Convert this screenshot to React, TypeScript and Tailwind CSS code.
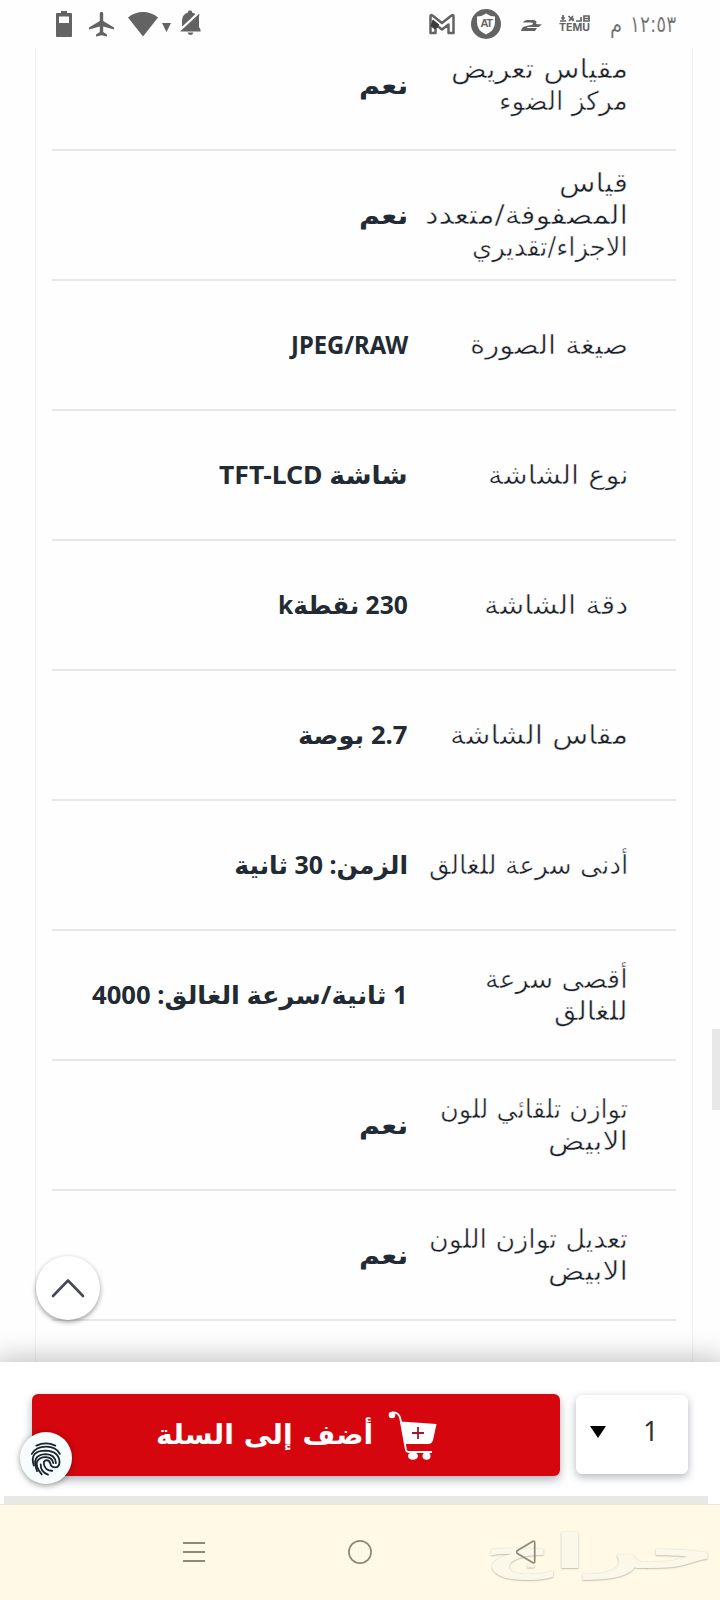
import { useLayoutEffect, useRef, useState } from "react";

type Line = [text: string, width: number];

/** Scales a single line of text horizontally so that it fills a given width. */
function FitText({ text, width }: { text: string; width: number }) {
  const ref = useRef<HTMLSpanElement>(null);
  const [scale, setScale] = useState(1);
  useLayoutEffect(() => {
    if (ref.current) setScale(width / ref.current.offsetWidth);
  }, [text, width]);
  return (
    <span className="block text-right whitespace-nowrap" style={{ width }}>
      <span ref={ref} className="inline-block origin-right" style={{ transform: `scaleX(${scale})` }}>
        {text}
      </span>
    </span>
  );
}

const rows: { label: Line[]; value: Line }[] = [
  { label: [["مقياس تعريض", 177], ["مركز الضوء", 129]], value: ["نعم", 49] },
  { label: [["قياس", 69], ["المصفوفة/متعدد", 203], ["الاجزاء/تقديري", 156]], value: ["نعم", 49] },
  { label: [["صيغة الصورة", 158]], value: ["JPEG/RAW", 117] },
  { label: [["نوع الشاشة", 140]], value: ["شاشة TFT-LCD", 189] },
  { label: [["دقة الشاشة", 144]], value: ["230 نقطةk", 130] },
  { label: [["مقاس الشاشة", 178]], value: ["2.7 بوصة", 110] },
  { label: [["أدنى سرعة للغالق", 199]], value: ["الزمن: 30 ثانية", 174] },
  { label: [["أقصى سرعة", 143], ["للغالق", 74]], value: ["1 ثانية/سرعة الغالق: 4000", 316] },
  { label: [["توازن تلقائي للون", 188], ["الابيض", 80]], value: ["نعم", 49] },
  { label: [["تعديل توازن اللون", 199], ["الابيض", 80]], value: ["نعم", 49] },
];

function StatusBar() {
  return (
    <header className="relative z-10 flex h-[48px] shrink-0 items-center justify-between bg-[#fefefe] pr-[44px] pl-[56px] text-[#636363]">
      <div className="flex items-center">
        <svg width="16" height="26" viewBox="0 0 16 26" fill="currentColor">
          <path fillRule="evenodd" d="M5 0h6v2h4q1 0 1 1v22q0 1-1 1h-14q-1 0-1-1v-22q0-1 1-1H5zM3 5.500V12h10V5.500z" />
        </svg>
        <svg className="ml-[17px]" width="25" height="26" viewBox="0 0 25 26" fill="currentColor">
          <path d="M10.800 2.500a1.700 1.700 0 0 1 3.400 0V10L25 16.500v2L14.200 15.500V21l3.800 2.500V25.500l-5.500-1.200-5.500 1.200v-2l3.800-2.500v-5.500L0 18.500v-2L10.800 10z" />
        </svg>
        <svg className="ml-[14px]" width="30" height="26" viewBox="0 0 30 26" fill="currentColor">
          <path d="M15 25.500 0 6.500Q6.500 1 15 1t15 5.500z" />
        </svg>
        <svg className="mt-[7px] ml-[4px]" width="9" height="9" viewBox="0 0 9 9" fill="currentColor">
          <path d="M0 0h9L4.500 9z" />
        </svg>
        <svg className="-mt-[2px] ml-[9px]" width="22" height="26" viewBox="0 0 22 26" fill="currentColor">
          <path d="M2 16V10Q2.500 4 8 2.500V1.500Q8 .5 10 .5T12 1.500V2.500q2.500.5 3.600 2L2.800 17z" />
          <path d="M19.500 3.500 0 21.500h20.500v-2L19 17V7zM7.500 22.500h6q-1 2.500-3 2.500t-3-2.500z" />
          <path d="M17.500 3.300 2 17.800" stroke="#fefefe" strokeWidth="1.500" />
        </svg>
      </div>
      <div className="flex items-center">
        <svg width="28" height="22" viewBox="0 0 28 22" fill="none" stroke="currentColor">
          <path d="M2.500 20V3q0-1.500 2-.5L14 10l9.500-7.500q2-1 2 .5v17h-5V11.500L14 16.500l-6.500-5V20z" strokeWidth="2.500" strokeLinejoin="round" />
          <path d="m5 7 6 5-4 4-4-3z" fill="#3c3c3c" stroke="#3c3c3c" />
        </svg>
        <div className="relative ml-[15px] flex h-[30px] w-[30px] items-center justify-center">
          <svg className="absolute inset-0" width="30" height="30" viewBox="0 0 30 30">
            <circle cx="15" cy="15" r="15" fill="currentColor" />
            <path d="M15 4.500q4 3 9 3v6q0 8-9 12-9-4-9-12v-6q5 0 9-3z" fill="#fefefe" />
          </svg>
          <span className="relative -mt-[2px] font-['Liberation_Sans'] text-[11px] leading-none font-bold tracking-[-1.5px]">AT</span>
        </div>
        <svg className="mt-[2px] ml-[20px]" width="21" height="11" viewBox="0 0 21 11" fill="currentColor">
          <path d="M2 2.500Q3 0 6 0h6q3.500 0 3.500 2.500L15 4l6 .5L17.500 7H7.500q-1.500 0-1.500 1h10L14 11H0Q.5 7 4.500 6.200L10 5q2-.5 2-1.500t-2-1z" />
        </svg>
        <div className="mt-[1px] ml-[17px] flex w-[31px] flex-col items-center font-['Inter'] leading-none font-bold">
          <svg width="30" height="7" viewBox="0 0 30 7" fill="none" stroke="currentColor" strokeWidth="1.700">
            <path d="M0 6h6M3 0v5M1 3h4M8.500 1l5 5M13 1 9 6M12 4h2M16 6h5V2M24 1h5v5h-5zM24 3.500h5" />
          </svg>
          <span className="mt-[1px] text-[10.500px]">TEMU</span>
        </div>
        <div dir="rtl" className="ml-[20px] flex gap-[8px] font-['DejaVu_Sans',sans-serif] text-[23px] leading-[32px] text-[#6c6c6c] [-webkit-text-stroke:0.2px_#fefefe]">
          <FitText text="١٢:٥٣" width={46} />
          <FitText text="م" width={12} />
        </div>
      </div>
    </header>
  );
}

function SpecTable() {
  return (
    <main className="mx-[35px] w-[658px] flex-1 overflow-hidden border-x border-[#f0f2f2] px-[16px]">
      <div dir="rtl" className="-mt-[27px]">
        {rows.map(({ label, value }, i) => (
          <div key={i} className="flex h-[130px] items-center border-b-2 border-[#e5e7e7] pr-[48px]">
            <div className="w-[220px] shrink-0 font-['DejaVu_Sans',sans-serif] text-[26px] leading-[32px] text-[#1a2026] [-webkit-text-stroke:0.5px_#fefefe]">
              {label.map(([text, width]) => (
                <FitText key={text} text={text} width={width} />
              ))}
            </div>
            <div className="-mt-[2px] font-['Noto_Sans','DejaVu_Sans',sans-serif] text-[25px] leading-[32px] font-bold text-[#222a33]">
              <FitText text={value[0]} width={value[1]} />
            </div>
          </div>
        ))}
      </div>
    </main>
  );
}

function CartIcon() {
  return (
    <svg width="49" height="49" viewBox="0 0 49 49" fill="white">
      <circle cx="4" cy="4" r="3.300" />
      <path d="M4 1.500q7-1 8.500 7L18 39q.5 2 2.500 2H44" fill="none" stroke="white" strokeWidth="1.800" />
      <path d="M12.500 10.500 48.500 13 45 29q-1 4-5 4H16.500z" />
      <path d="M30 16v12M24 22h12" stroke="#a3152a" strokeWidth="1.800" />
      <ellipse cx="25" cy="45" rx="5" ry="3.800" />
      <ellipse cx="38.500" cy="45" rx="4" ry="3.800" />
    </svg>
  );
}

function FingerprintIcon() {
  return (
    <svg width="32" height="37" viewBox="45 40 96 112" fill="none" stroke="currentColor" strokeWidth="5.500" strokeLinecap="round">
      <path d="M64 57Q93 43 121 57" />
      <path d="M50 82Q62 60 93 60T135 82" />
      <path d="M56 117Q42 72 92 72Q133 74 134 107Q133 123 121 123Q108 123 106 111Q104 101 94 101Q83 103 88 118Q94 134 112 133" />
      <path d="M66 134Q46 85 92 83Q121 84 123 110" />
      <path d="M80 144Q60 120 66 105Q74 91 93 92Q112 93 115 110" />
      <path d="M99 145Q76 136 77 114" />
    </svg>
  );
}

function CartBar() {
  return (
    <section className="relative z-10 flex h-[134px] shrink-0 gap-[16px] bg-white pt-[32px] pl-[32px] shadow-[0_2px_26px_6px_rgba(0,0,0,0.24)]">
      <button className="flex h-[82px] w-[528px] items-center rounded-[6px] bg-[#d6060f] pl-[124px] text-white shadow-[0_4px_10px_rgba(60,70,90,0.4)]">
        <span dir="rtl" className="font-['DejaVu_Sans',sans-serif] text-[27px] leading-[36px] font-bold">
          <FitText text="أضف إلى السلة" width={217} />
        </span>
        <span className="ml-[15px]">
          <CartIcon />
        </span>
      </button>
      <button className="mt-[1px] flex h-[79px] w-[112px] items-center rounded-[6px] bg-white pl-[14px] shadow-[0_3px_8px_rgba(60,70,90,0.4)]">
        <svg className="-mt-[5px]" width="16" height="12" viewBox="0 0 16 12">
          <path d="M0 0h16L8 12z" fill="black" />
        </svg>
        <span className="-mt-[8px] ml-[37px] font-['Noto_Sans'] text-[27px] leading-none text-[#333]">1</span>
      </button>
      <div className="absolute top-[70px] left-[20px] flex h-[52px] w-[52px] items-center justify-center rounded-full bg-[#f7fcff] text-[#1c242c] shadow-[0_1px_6px_rgba(0,0,0,0.4)]">
        <FingerprintIcon />
      </div>
    </section>
  );
}

function NavBar() {
  return (
    <footer className="relative z-20 flex h-[96px] shrink-0 items-center border-t border-[#eee6d0] bg-[#fff9e6] pl-[183px] text-[#8d887b]">
      <div dir="rtl" className="absolute top-[16px] left-[482px] font-['DejaVu_Sans',sans-serif] text-[48px] leading-[60px] font-bold text-[#fbf8ea] [text-shadow:0_1px_1px_#c4c1b4,0_-0.5px_1px_#d0cdc0]">
        <FitText text="حراج" width={234} />
      </div>
      <svg className="relative -mt-[2px]" width="23" height="22" viewBox="0 0 23 22" stroke="currentColor" strokeWidth="1.800">
        <path d="M0 2h22M0 11h22M0 20h22" />
      </svg>
      <svg className="relative -mt-[2px] ml-[142px]" width="24" height="24" viewBox="0 0 24 24" fill="none" stroke="currentColor" strokeWidth="1.700">
        <circle cx="12" cy="12" r="11.100" />
      </svg>
      <svg className="relative -mt-[2px] ml-[144px]" width="20" height="24" viewBox="0 0 20 24" fill="none" stroke="currentColor" strokeWidth="1.700" strokeLinejoin="round">
        <path d="M1.500 10.500 16.500 1.500q2.200-1 2.200 1v19q0 2-2.200 1L1.500 13.500q-2-1.500 0-3z" />
      </svg>
    </footer>
  );
}

export default function App() {
  return (
    <div className="relative flex h-[1600px] w-[720px] flex-col overflow-hidden bg-[#fefefe]">
      <StatusBar />
      <SpecTable />
      <CartBar />
      <div className="relative z-10 h-[8px] shrink-0 bg-white pr-[12px] pl-[4px]">
        <div className="h-full bg-[#e8e8e6]" />
      </div>
      <NavBar />
      <button className="absolute top-[1256px] left-[36px] flex h-[64px] w-[64px] items-center justify-center rounded-full bg-white shadow-[0_2px_5px_rgba(0,0,0,0.4)]">
        <svg width="34" height="20" viewBox="0 0 34 20" fill="none" stroke="#454b54" strokeWidth="2.600" strokeLinecap="round" strokeLinejoin="round">
          <path d="M2 18 17 2.500 32 18" />
        </svg>
      </button>
      <div className="absolute top-[1029px] right-0 h-[81px] w-[8px] bg-[#e8e8e8]" />
    </div>
  );
}
